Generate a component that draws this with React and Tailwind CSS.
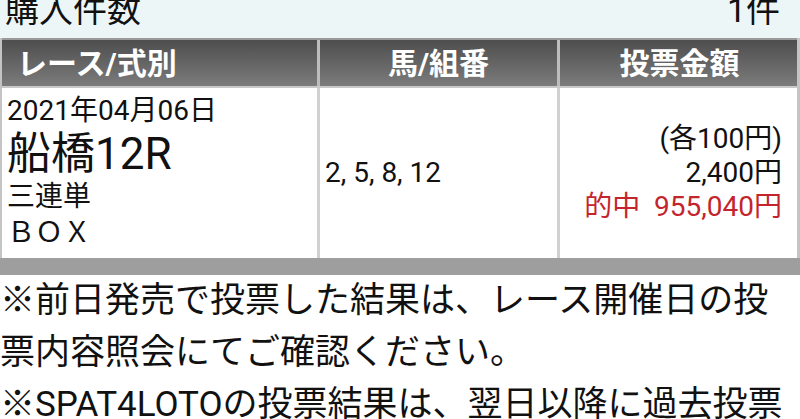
import React from 'react';

const font = { fontFamily: 'Roboto, "Noto Sans CJK JP", sans-serif' };

export default function App() {
    return (
        <div className="w-[800px] h-[419px] overflow-hidden bg-white text-[#111]" style={font}>
            <div className="h-[38px] bg-[#edf6f6] flex justify-between pl-[5px] pr-[20px] overflow-hidden">
                <div className="text-[34px] leading-[34px] -mt-[7px]">購入件数</div>
                <div className="text-[34px] leading-[34px] -mt-[7px]">1件</div>
            </div>

            <div className="border-l-2 border-r-[3px] border-[#c4c4c4]">
                <div className="grid grid-cols-[318px_240px_239px] h-[50px] border-t-2 border-b-2 border-t-[#9a9a9a] border-b-[#c8c8c8] bg-linear-to-b from-[#4e4e4e] to-[#7c7c7c] text-white font-bold text-[30px]">
                    <div className="flex items-center pl-[15px] border-r-[3px] border-[#bdbdbd]">レース/式別</div>
                    <div className="flex items-center justify-center border-r-[3px] border-[#bdbdbd]">馬/組番</div>
                    <div className="flex items-center justify-center">投票金額</div>
                </div>

                <div className="grid grid-cols-[318px_240px_239px] h-[170px] bg-white text-[28px]">
                    <div className="pl-[5px] pt-[5px] border-r-[3px] border-[#d0d0d0]">
                        <div className="leading-[36px]">2021年04月06日</div>
                        <div className="text-[44px] leading-[50px]">船橋12R</div>
                        <div className="leading-[36px]">三連単</div>
                        <div className="leading-[36px]">ＢＯＸ</div>
                    </div>
                    <div className="flex items-center pl-[5px] border-r-[3px] border-[#d0d0d0]">2, 5, 8, 12</div>
                    <div className="flex flex-col items-end justify-center pr-[17px] leading-[34px]">
                        <div>(各100円)</div>
                        <div>2,400円</div>
                        <div className="text-[#c4252c]">的中&nbsp;&nbsp;955,040円</div>
                    </div>
                </div>
            </div>

            <div className="h-[17px] bg-[#9e9e9e]"></div>

            <div className="text-[35px] leading-[52px]">
                <p>※前日発売で投票した結果は、レース開催日の投票内容照会にてご確認ください。</p>
                <p>※SPAT4LOTOの投票結果は、翌日以降に過去投票照会にてご確認ください。</p>
            </div>
        </div>
    );
}
